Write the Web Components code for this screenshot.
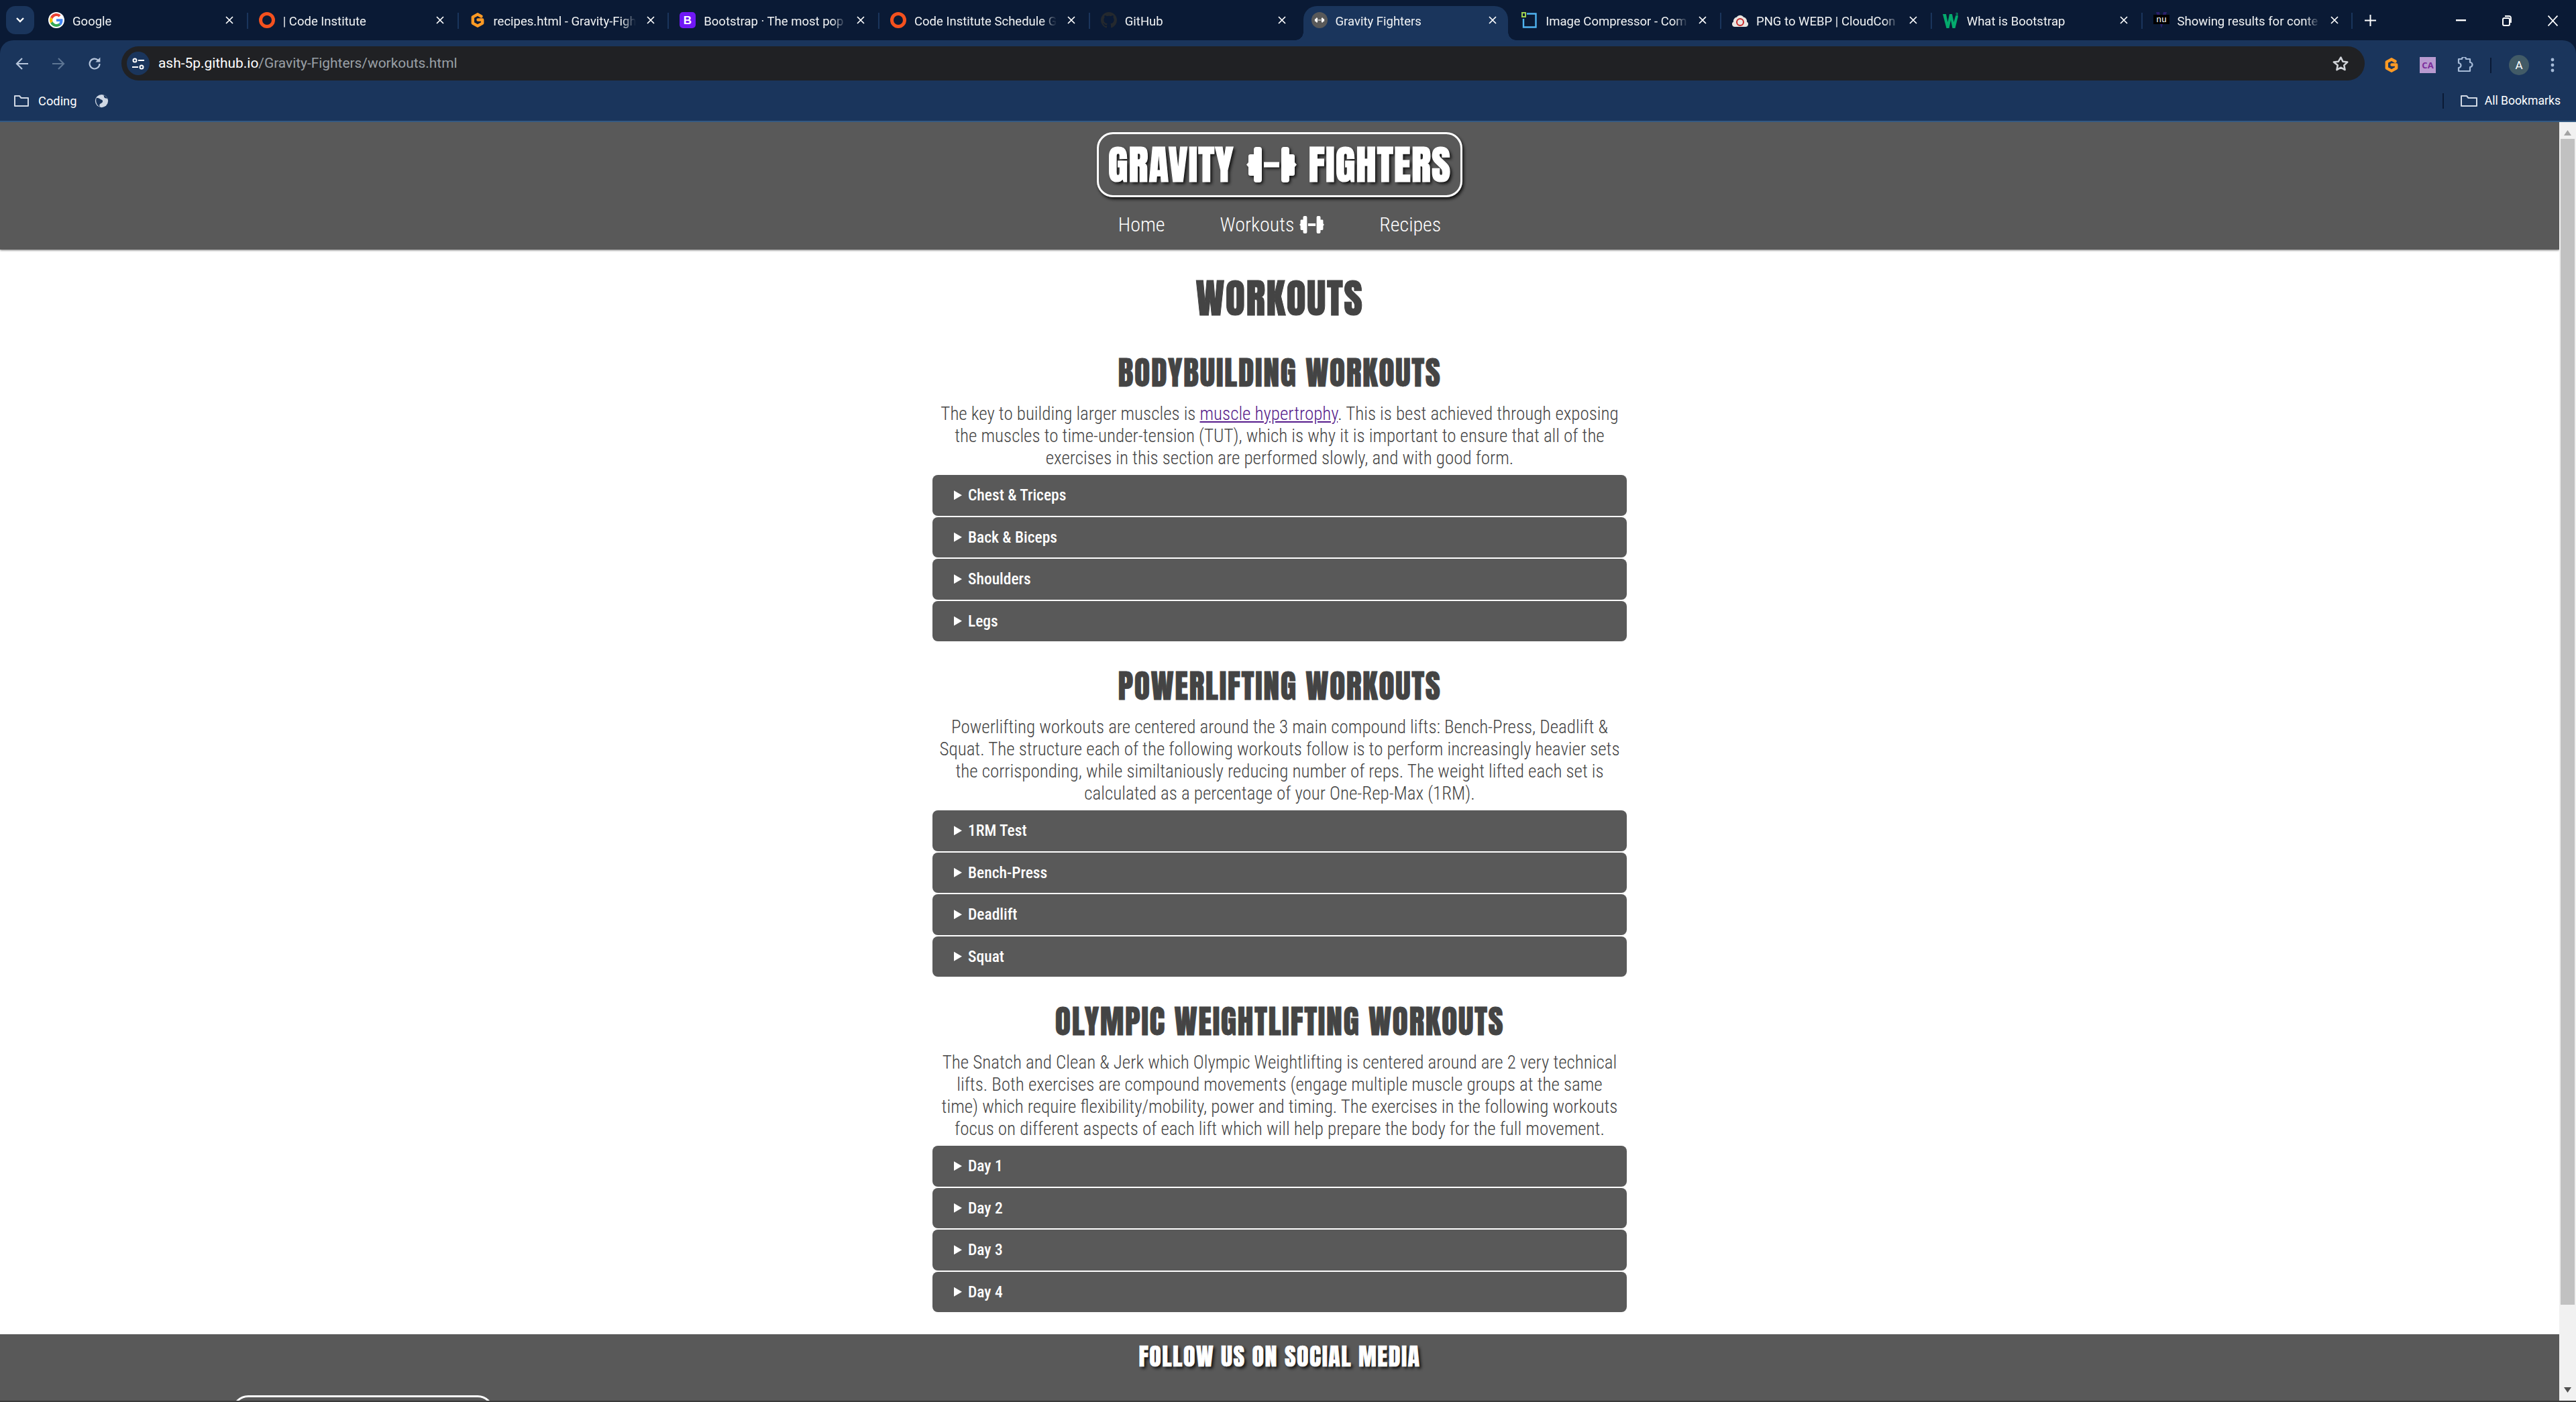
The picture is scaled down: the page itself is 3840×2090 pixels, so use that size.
<!doctype html>
<html lang="en"><head><meta charset="utf-8"><title>Gravity Fighters</title>
<style>
html,body{margin:0;height:2090px;overflow:hidden;background:#fff}
body{display:flex;flex-direction:column;font-family:"Roboto Condensed",Roboto,sans-serif}
</style></head><body>

<browser-frame>
  <browser-tab title-text="Google" icon="google"></browser-tab>
  <browser-tab title-text="| Code Institute" icon="ci"></browser-tab>
  <browser-tab title-text="recipes.html - Gravity-Figh" icon="gitpod"></browser-tab>
  <browser-tab title-text="Bootstrap · The most pop" icon="bootstrap"></browser-tab>
  <browser-tab title-text="Code Institute Schedule G" icon="ci"></browser-tab>
  <browser-tab title-text="GitHub" icon="github" no-sep></browser-tab>
  <browser-tab title-text="Gravity Fighters" icon="gravity" active></browser-tab>
  <browser-tab title-text="Image Compressor - Com" icon="compress"></browser-tab>
  <browser-tab title-text="PNG to WEBP | CloudCon" icon="cloud"></browser-tab>
  <browser-tab title-text="What is Bootstrap" icon="w3"></browser-tab>
  <browser-tab title-text="Showing results for conte" icon="nu"></browser-tab>
</browser-frame>

<page-window>
  <site-header>
    <a-nav-link>Home</a-nav-link>
    <a-nav-link icon>Workouts</a-nav-link>
    <a-nav-link>Recipes</a-nav-link>
  </site-header>
  <main-column>
    <h-page>WORKOUTS</h-page>
    <workout-section heading="BODYBUILDING WORKOUTS">
      <span slot="intro">The key to building larger muscles is <a href="#" style="color:#551a8b">muscle hypertrophy</a>. This is best achieved through exposing the muscles to time-under-tension (TUT), which is why it is important to ensure that all of the exercises in this section are performed slowly, and with good form.</span>
      <workout-item>Chest &amp; Triceps</workout-item>
      <workout-item>Back &amp; Biceps</workout-item>
      <workout-item>Shoulders</workout-item>
      <workout-item>Legs</workout-item>
    </workout-section>
    <workout-section heading="POWERLIFTING WORKOUTS">
      <span slot="intro">Powerlifting workouts are centered around the 3 main compound lifts: Bench-Press, Deadlift &amp; Squat. The structure each of the following workouts follow is to perform increasingly heavier sets the corrisponding, while similtaniously reducing number of reps. The weight lifted each set is calculated as a percentage of your One-Rep-Max (1RM).</span>
      <workout-item>1RM Test</workout-item>
      <workout-item>Bench-Press</workout-item>
      <workout-item>Deadlift</workout-item>
      <workout-item>Squat</workout-item>
    </workout-section>
    <workout-section heading="OLYMPIC WEIGHTLIFTING WORKOUTS">
      <span slot="intro">The Snatch and Clean &amp; Jerk which Olympic Weightlifting is centered around are 2 very technical lifts. Both exercises are compound movements (engage multiple muscle groups at the same time) which require flexibility/mobility, power and timing. The exercises in the following workouts focus on different aspects of each lift which will help prepare the body for the full movement.</span>
      <workout-item>Day 1</workout-item>
      <workout-item>Day 2</workout-item>
      <workout-item>Day 3</workout-item>
      <workout-item>Day 4</workout-item>
    </workout-section>
  </main-column>
  <site-footer></site-footer>
</page-window>

<script>
const DUMBBELL = `<svg viewBox="0 0 75 53" fill="currentColor" aria-hidden="true"><path d="M15 0h4a4 4 0 0 1 4 4v45a4 4 0 0 1-4 4h-4a4 4 0 0 1-4-4v-6H6a3 3 0 0 1-3-3V30L0 26.500 3 23V14a3 3 0 0 1 3-3h5V4a4 4 0 0 1 4-4z"/><rect x="26" y="22.500" width="23" height="8"/><path d="M56 0h4a4 4 0 0 1 4 4v7h5a3 3 0 0 1 3 3v9l3 3.500-3 3.500v10a3 3 0 0 1-3 3h-5v6a4 4 0 0 1-4 4h-4a4 4 0 0 1-4-4V4a4 4 0 0 1 4-4z"/></svg>`;

const GITPOD = `<path d="M17.500 6.500 12 3.300 4.800 7.400v9.200L12 20.700l7.200-4.100v-5.100H12.500" fill="none" stroke="#ff9a24" stroke-width="4.400" stroke-linejoin="round" stroke-linecap="round"/>`;

const FAVICONS = {
  google:`<svg viewBox="0 0 48 48"><circle cx="24" cy="24" r="24" fill="#fff"/><path fill="#4285f4" d="M43 24.500c0-1.500-.1-2.600-.4-3.900H24v7.300h10.900c-.5 2.700-2 5-4.400 6.500l6.700 5.200C41 36.100 43 30.800 43 24.500z"/><path fill="#34a853" d="M24 44c5.400 0 9.900-1.800 13.200-4.900l-6.700-5.200c-1.700 1.200-4 2-6.500 2-5 0-9.300-3.400-10.800-8l-6.900 5.300C9.600 39.600 16.300 44 24 44z"/><path fill="#fbbc05" d="M13.200 27.900c-.4-1.200-.6-2.500-.6-3.900s.2-2.700.6-3.900l-6.900-5.300C4.800 17.400 4 20.600 4 24s.8 6.600 2.300 9.200z"/><path fill="#ea4335" d="M24 12c2.900 0 5.400 1 7.300 2.900l5.900-5.900C33.900 5.900 29.400 4 24 4 16.300 4 9.600 8.400 6.300 14.800l6.900 5.300c1.500-4.700 5.800-8.100 10.800-8.100z"/></svg>`,
  ci:`<svg viewBox="0 0 24 24"><ellipse cx="12" cy="12" rx="9.500" ry="9.500" fill="none" stroke="#f4511e" stroke-width="5"/></svg>`,
  gitpod:`<svg viewBox="0 0 24 24">${GITPOD}</svg>`,
  bootstrap:`<svg viewBox="0 0 24 24"><rect width="24" height="24" rx="5" fill="#7018f5"/><text x="12" y="18" text-anchor="middle" font-family="Liberation Sans" font-weight="700" font-size="17" fill="#fff">B</text></svg>`,
  github:`<svg viewBox="0 0 16 16"><path fill="#24292e" d="M8 0C3.580 0 0 3.580 0 8c0 3.540 2.290 6.530 5.470 7.590.4.070.55-.17.55-.38 0-.19-.01-.82-.01-1.490-2.010.37-2.530-.49-2.690-.94-.09-.23-.48-.94-.82-1.130-.28-.15-.68-.52-.01-.53.63-.01 1.080.58 1.230.82.720 1.210 1.870.87 2.330.66.070-.52.280-.87.510-1.070-1.780-.2-3.640-.89-3.640-3.950 0-.87.310-1.590.820-2.150-.08-.2-.36-1.020.08-2.120 0 0 .67-.21 2.200.82.64-.18 1.320-.27 2-.27s1.360.09 2 .27c1.530-1.040 2.200-.82 2.200-.82.44 1.100.16 1.920.08 2.120.51.560.82 1.270.82 2.150 0 3.070-1.870 3.750-3.650 3.950.29.250.54.730.54 1.480 0 1.070-.01 1.930-.01 2.200 0 .21.15.46.55.38A8.010 8.010 0 0 0 16 8c0-4.420-3.580-8-8-8z"/></svg>`,
  gravity:`<svg viewBox="0 0 24 24"><circle cx="12" cy="12" r="12" fill="#595959"/><g transform="translate(4.500 8.500) scale(.2 .13)" fill="#fff">${DUMBBELL.replace(/<\/?svg[^>]*>/g,'')}</g></svg>`,
  compress:`<svg viewBox="0 0 24 24"><path d="M8 2.500h13.500v20H3V10" fill="none" stroke="#4fb3f0" stroke-width="2.400"/><rect x="0" y="0" width="7" height="8" fill="#9ed04f"/><rect x="2" y="2" width="3" height="4" fill="#0a1a35"/></svg>`,
  cloud:`<svg viewBox="0 0 24 24"><path fill="#e8e4e0" d="M4 22a4 4 0 0 1-2-7.500 6 6 0 0 1 5-7 6 6 0 0 1 10 0 6 6 0 0 1 5 7A4 4 0 0 1 20 22z"/><circle cx="12" cy="15" r="5" fill="none" stroke="#c62828" stroke-width="2"/></svg>`,
  w3:`<svg viewBox="0 0 24 24"><path fill="#04aa6d" d="M0 3h5l2.500 12L10 3h4l2.500 12L19 6h4l-4.500 18h-4L12 12 9.500 24h-4z"/><text x="19" y="6" font-family="Liberation Sans" font-size="7" font-weight="700" fill="#04aa6d">3</text></svg>`,
  nu:`<svg viewBox="0 0 24 24"><path d="M4 0l8 24 8-24h-5l-3 12-3-12z" fill="#2a1f6b"/><rect x="0" y="4" width="24" height="14" fill="#000"/><text x="12" y="15" text-anchor="middle" font-family="Liberation Mono" font-size="13" fill="#fff">nu</text></svg>`
};

const CLOSE = `<svg viewBox="0 0 12 12" width="12" height="12"><path d="M1 1l10 10M11 1 1 11" stroke="currentColor" stroke-width="1.700" fill="none"/></svg>`;

class BrowserTab extends HTMLElement {
  connectedCallback() {
    this.attachShadow({ mode: 'open' }).innerHTML = `
      <style>
        :host { display:flex; align-items:center; width:313.750px; height:51px; box-sizing:border-box; position:relative;
          color:#f1f3f4; font:400 18.500px Roboto,sans-serif; }
        :host(:not([active]))::after { content:""; position:absolute; right:0; top:10px; height:24px; width:2px; background:#1a355c; }
        :host([no-sep])::after { display:none; }
        :host([active])::before { content:""; position:absolute; left:4px; right:4px; top:0; bottom:0; background:#1a355c; border-radius:20px 20px 0 0; }
        :host([active])::after { content:""; position:absolute; left:-8px; right:-8px; bottom:0; height:12px;
          background:radial-gradient(circle at 0 0,transparent 11.500px,#1a355c 12px) left bottom/12px 12px no-repeat,
                     radial-gradient(circle at 100% 0,transparent 11.500px,#1a355c 12px) right bottom/12px 12px no-repeat; }
        .ico { width:24px; height:24px; margin:0 12px 0 16px; flex:none; position:relative; top:-4.500px; }
        .ico svg { display:block; width:24px; height:24px; }
        .name { width:212px; flex:none; white-space:nowrap; overflow:hidden; position:relative; top:-3px; line-height:26px;
          -webkit-mask-image:linear-gradient(90deg,#000 90%,transparent); mask-image:linear-gradient(90deg,#000 90%,transparent); }
        .x { margin-left:16px; width:12px; height:12px; flex:none; position:relative; top:-4.500px; color:#fff; }
        .x svg { display:block; }
      </style>
      <span class="ico">${FAVICONS[this.getAttribute('icon')]}</span>
      <span class="name">${this.getAttribute('title-text')}</span>
      <span class="x">${CLOSE}</span>`;
  }
}
customElements.define('browser-tab', BrowserTab);

class BrowserFrame extends HTMLElement {
  constructor() {
    super();
    this.attachShadow({ mode: 'open' }).innerHTML = `
      <style>
        :host { display:block; flex:none; height:182px; background:#0a1a35; color:#fff; font-family:Roboto,sans-serif; }
        svg { display:block; }
        .strip { height:60px; display:flex; box-sizing:border-box; padding-top:9px; position:relative; }
        .list { width:42px; height:42px; margin-left:9px; margin-right:5px; border-radius:14px; background:#1a355c; display:flex; align-items:center; justify-content:center; flex:none; }
        .tabs { display:flex; }
        .plus { margin-left:18px; margin-top:13px; }
        .win { margin-left:auto; display:flex; align-items:flex-start; }
        .win svg { margin-top:14px; }
        .tool { height:60px; background:#1a355c; border-radius:20px 20px 0 0; display:flex; align-items:flex-start; position:relative; }
        .nav { display:flex; padding-top:24px; }
        .omni { position:absolute; left:181px; width:3344px; top:9px; height:51px; box-sizing:border-box; background:#202124; border-radius:26px; display:flex; align-items:center; }
        .tune { width:34px; height:35px; margin-left:8px; border-radius:50%; background:#1a355c; display:flex; align-items:center; justify-content:center; flex:none; }
        .url { margin-left:13px; font-size:20.900px; color:#9aa0a6; white-space:nowrap; position:relative; top:-1px; }
        .url b { font-weight:400; color:#fff; }
        .star { margin-left:auto; margin-right:23px; }
        .right { position:absolute; left:3553px; top:22px; display:flex; align-items:center; height:30px; }
        .marks { height:60px; background:#1a355c; display:flex; align-items:center; font-size:18.300px; border-bottom:2px solid #345a82; position:relative; }
        .marks .folder { margin-left:21px; }
        .coding { margin-left:14px; }
        .globe { margin-left:27px; }
        .all { margin-left:auto; display:flex; align-items:center; margin-right:23px; font-size:17.600px; }
        .vsep { width:2px; height:23px; background:#0a1a35; margin-right:25px; }
      </style>
      <div class="strip">
        <div class="list"><svg width="14" height="10" viewBox="0 0 14 10"><path d="M2 2l5 5 5-5" fill="none" stroke="#fff" stroke-width="2.400"/></svg></div>
        <div class="tabs"><slot></slot></div>
        <svg class="plus" width="17" height="17" viewBox="0 0 17 17"><path d="M8.500 0v17M0 8.500h17" stroke="#fff" stroke-width="2"/></svg>
        <div class="win">
          <svg style="margin-right:54px;margin-top:20px" width="15" height="3"><rect width="15" height="2.400" fill="#fff"/></svg>
          <svg style="margin-right:54px" width="14" height="16" viewBox="0 0 14 16"><rect x="1" y="4" width="10" height="11" rx="2" fill="none" stroke="#fff" stroke-width="2"/><path d="M4 1h6a3 3 0 0 1 3 3v7" fill="none" stroke="#fff" stroke-width="1.800"/></svg>
          <svg style="margin-right:27px" width="15" height="16" viewBox="0 0 15 16"><path d="M.5.500l14 15M14.500.500l-14 15" stroke="#fff" stroke-width="1.800"/></svg>
        </div>
      </div>
      <div class="tool">
        <div class="nav">
          <svg style="margin-left:23px" width="20" height="22" viewBox="0 0 20 20"><path d="M19 10H2M10 2l-8 8 8 8" fill="none" stroke="#b7c6dc" stroke-width="2.200"/></svg>
          <svg style="margin-left:34px" width="20" height="22" viewBox="0 0 20 20"><path d="M1 10h17M10 2l8 8-8 8" fill="none" stroke="#5d7593" stroke-width="2.200"/></svg>
          <svg style="margin-left:34px" width="21" height="22" viewBox="0 0 24 24"><path d="M20 12a8.500 8.500 0 1 1-2.500-6" fill="none" stroke="#b7c6dc" stroke-width="2.500"/><path d="M21 1v8h-8z" fill="#b7c6dc"/></svg>
        </div>
        <div class="omni">
          <div class="tune"><svg width="20" height="20" viewBox="0 0 20 20" fill="none" stroke="#fff" stroke-width="2"><circle cx="5" cy="5" r="2.500"/><path d="M10 5h9M1 15h9"/><circle cx="15" cy="15" r="2.500"/></svg></div>
          <div class="url"><b>ash-5p.github.io</b>/Gravity-Fighters/workouts.html</div>
          <svg class="star" width="25" height="24" viewBox="0 0 24 24"><path d="M12 2.500l2.900 6.300 6.900.8-5.100 4.700 1.400 6.800-6.100-3.400-6.100 3.400 1.400-6.800L1.300 9.600l6.900-.8z" fill="none" stroke="#d0d3d8" stroke-width="2.500" stroke-linejoin="round"/></svg>
        </div>
        <div class="right">
          <svg width="24" height="26" viewBox="0 0 24 24">${GITPOD}</svg>
          <svg style="margin-left:30px" width="24" height="24" viewBox="0 0 24 24"><rect width="24" height="24" fill="#b89ad0"/><text x="12" y="17" text-anchor="middle" font-family="Open Sans" font-weight="700" font-size="13" fill="#7b2d9b">CA</text></svg>
          <svg style="margin-left:31px" width="25" height="24" viewBox="0 0 25 24"><path d="M3 3h5a3 3 0 0 1 6 0h6v5a3 3 0 0 1 0 7v6H3v-5a3.500 3.500 0 0 0 0-7z" fill="none" stroke="#a6bbd8" stroke-width="2.200" stroke-linejoin="round"/></svg>
          <div style="width:2px;height:23px;background:#0a1a35;margin-left:25px"></div>
          <div style="width:30px;height:30px;border-radius:50%;background:#425b67;margin-left:26px;display:flex;align-items:center;justify-content:center;font-size:17px;color:#fff">A</div>
          <svg style="margin-left:32px" width="6" height="22" viewBox="0 0 6 22" fill="#a6bbd8"><circle cx="3" cy="3" r="2.400"/><circle cx="3" cy="11" r="2.400"/><circle cx="3" cy="19" r="2.400"/></svg>
        </div>
      </div>
      <div class="marks">
        <svg class="folder" width="22" height="18" viewBox="0 0 22 18"><path d="M1 2h7l2.500 3H21v12H1z" fill="none" stroke="#d0d8e4" stroke-width="2" stroke-linejoin="round"/></svg>
        <span class="coding">Coding</span>
        <svg class="globe" width="21" height="21" viewBox="0 0 24 24"><circle cx="12" cy="12" r="11" fill="#d0d8e4"/><path d="M3 7c4-1 6 2 9 3s2 5-1 6-3 4-2 6c-4-2-8-8-6-15zM15 2c2 2 0 4 3 5s3 0 4 2c0-3-3-6-7-7z" fill="#1a355c"/></svg>
        <div class="all">
          <div class="vsep"></div>
          <svg width="25" height="18" viewBox="0 0 25 18"><path d="M1 2h8l2.500 3H24v12H1z" fill="none" stroke="#d0d8e4" stroke-width="2" stroke-linejoin="round"/></svg>
          <span style="margin-left:11px">All Bookmarks</span>
        </div>
      </div>`;
  }
}
customElements.define('browser-frame', BrowserFrame);

class PageWindow extends HTMLElement {
  constructor() {
    super();
    this.attachShadow({ mode: 'open' }).innerHTML = `
      <style>
        :host { display:flex; flex:none; height:1906px; overflow:hidden; border-bottom:2px solid #3a3a3a; }
        .view { flex:1; min-width:0; height:1906px; overflow:hidden; display:flex; flex-direction:column; }
        .bar { width:25px; flex:none; background:#f1f1f1; display:flex; flex-direction:column; align-items:center; }
        .up { margin-top:12px; }
        .thumb { width:21px; height:1738px; margin-top:5px; background:#c1c1c1; flex:none; }
        .down { margin-top:auto; margin-bottom:12px; }
      </style>
      <div class="view"><slot></slot></div>
      <div class="bar">
        <svg class="up" width="11" height="8" viewBox="0 0 11 8"><path d="M5.500 0 11 8H0z" fill="#a3a3a3"/></svg>
        <div class="thumb"></div>
        <svg class="down" width="11" height="8" viewBox="0 0 11 8"><path d="M5.500 8 11 0H0z" fill="#505050"/></svg>
      </div>`;
  }
}
customElements.define('page-window', PageWindow);

class SiteHeader extends HTMLElement {
  constructor() {
    super();
    this.attachShadow({ mode: 'open' }).innerHTML = `
      <style>
        :host { display:flex; flex-direction:column; align-items:center; flex:none; height:190px; box-sizing:border-box; padding-top:15px;
          background:#595959; box-shadow:0 1px 3px rgba(0,0,0,.55); position:relative; z-index:1; }
        .logo { box-sizing:border-box; width:545px; height:97px; border:3px solid #fff; border-radius:24px; display:flex; align-items:center; justify-content:center; gap:18px;
          box-shadow:2px 3px 4px #111; color:#fff; font:400 61px/1 Anton,"Roboto Condensed",sans-serif; letter-spacing:1px; -webkit-text-stroke:1.200px #fff; text-shadow:3px 3px 4px #111; }
        .logo svg { width:75px; height:53px; filter:drop-shadow(2px 2px 2px #111); }
        nav { display:flex; gap:82px; margin-top:23px; }
      </style>
      <div class="logo"><span>GRAVITY</span>${DUMBBELL}<span>FIGHTERS</span></div>
      <nav><slot></slot></nav>`;
  }
}
customElements.define('site-header', SiteHeader);

class ANavLink extends HTMLElement {
  constructor() {
    super();
    this.attachShadow({ mode: 'open' }).innerHTML = `
      <style>
        :host { display:flex; align-items:center; gap:8px; color:#fff; font:300 30px/36px "Roboto Condensed",Roboto,sans-serif; }
        #i { display:flex; }
        svg { width:37px; height:26px; }
      </style>
      <slot></slot><span id="i"></span>`;
  }
  connectedCallback() {
    if (this.hasAttribute('icon')) this.shadowRoot.getElementById('i').innerHTML = DUMBBELL;
    else this.shadowRoot.getElementById('i').remove();
  }
}
customElements.define('a-nav-link', ANavLink);

class MainColumn extends HTMLElement {
  constructor() {
    super();
    this.attachShadow({ mode: 'open' }).innerHTML = `
      <style>:host { display:block; flex:none; width:1035px; margin:0 auto; height:1617px; box-sizing:border-box; }</style>
      <slot></slot>`;
  }
}
customElements.define('main-column', MainColumn);

class HPage extends HTMLElement {
  constructor() {
    super();
    this.attachShadow({ mode: 'open' }).innerHTML = `
      <style>:host { display:block; text-align:center; color:#444; font:400 60px/88px Anton,"Roboto Condensed",sans-serif; letter-spacing:1.500px; -webkit-text-stroke:1px #444; padding-top:29px; }
      h1 { font:inherit; margin:0; }</style>
      <h1><slot></slot></h1>`;
  }
}
customElements.define('h-page', HPage);

class WorkoutSection extends HTMLElement {
  connectedCallback() {
    this.attachShadow({ mode: 'open' }).innerHTML = `
      <style>
        :host { display:block; margin-top:31px; }
        h2 { margin:0 0 9px; text-align:center; color:#444; font:400 48px/72px Anton,"Roboto Condensed",sans-serif; letter-spacing:1.500px; -webkit-text-stroke:.8px #444; }
        p { margin:0 9px 8px; text-align:center; color:#444; font:300 27px/33px "Roboto Condensed",Roboto,sans-serif; }
        .list { display:flex; flex-direction:column; gap:2px; }
      </style>
      <h2>${this.getAttribute('heading')}</h2>
      <p><slot name="intro"></slot></p>
      <div class="list"><slot></slot></div>`;
  }
}
customElements.define('workout-section', WorkoutSection);

class WorkoutItem extends HTMLElement {
  constructor() {
    super();
    this.attachShadow({ mode: 'open' }).innerHTML = `
      <style>
        :host { display:block; background:#595959; border-radius:8px; color:#fff; font:500 23.500px/60.500px "Roboto Condensed",Roboto,sans-serif; }
        summary { cursor:pointer; height:60.500px; list-style:none; display:flex; align-items:center; padding-left:32px; }
        summary::-webkit-details-marker { display:none; }
        summary::before { content:""; width:12px; height:14px; margin-right:9px; background:#fff; clip-path:polygon(0 0,100% 50%,0 100%); }
      </style>
      <details><summary><slot></slot></summary></details>`;
  }
}
customElements.define('workout-item', WorkoutItem);

class SiteFooter extends HTMLElement {
  constructor() {
    super();
    this.attachShadow({ mode: 'open' }).innerHTML = `
      <style>
        :host { display:block; flex:none; height:99px; background:#595959; overflow:hidden; position:relative; }
        h3 { margin:0; padding-top:5px; text-align:center; color:#fff; font:400 36px/56px Anton,"Roboto Condensed",sans-serif; letter-spacing:1.500px; -webkit-text-stroke:.7px #fff; text-shadow:3px 3px 4px #111; }
        .social { box-sizing:border-box; width:390px; height:80px; margin:30px 0 0 346px; border:3px solid #fff; border-radius:24px; }
      </style>
      <h3>FOLLOW US ON SOCIAL MEDIA</h3>
      <div class="social"></div>`;
  }
}
customElements.define('site-footer', SiteFooter);
</script>
</body></html>
